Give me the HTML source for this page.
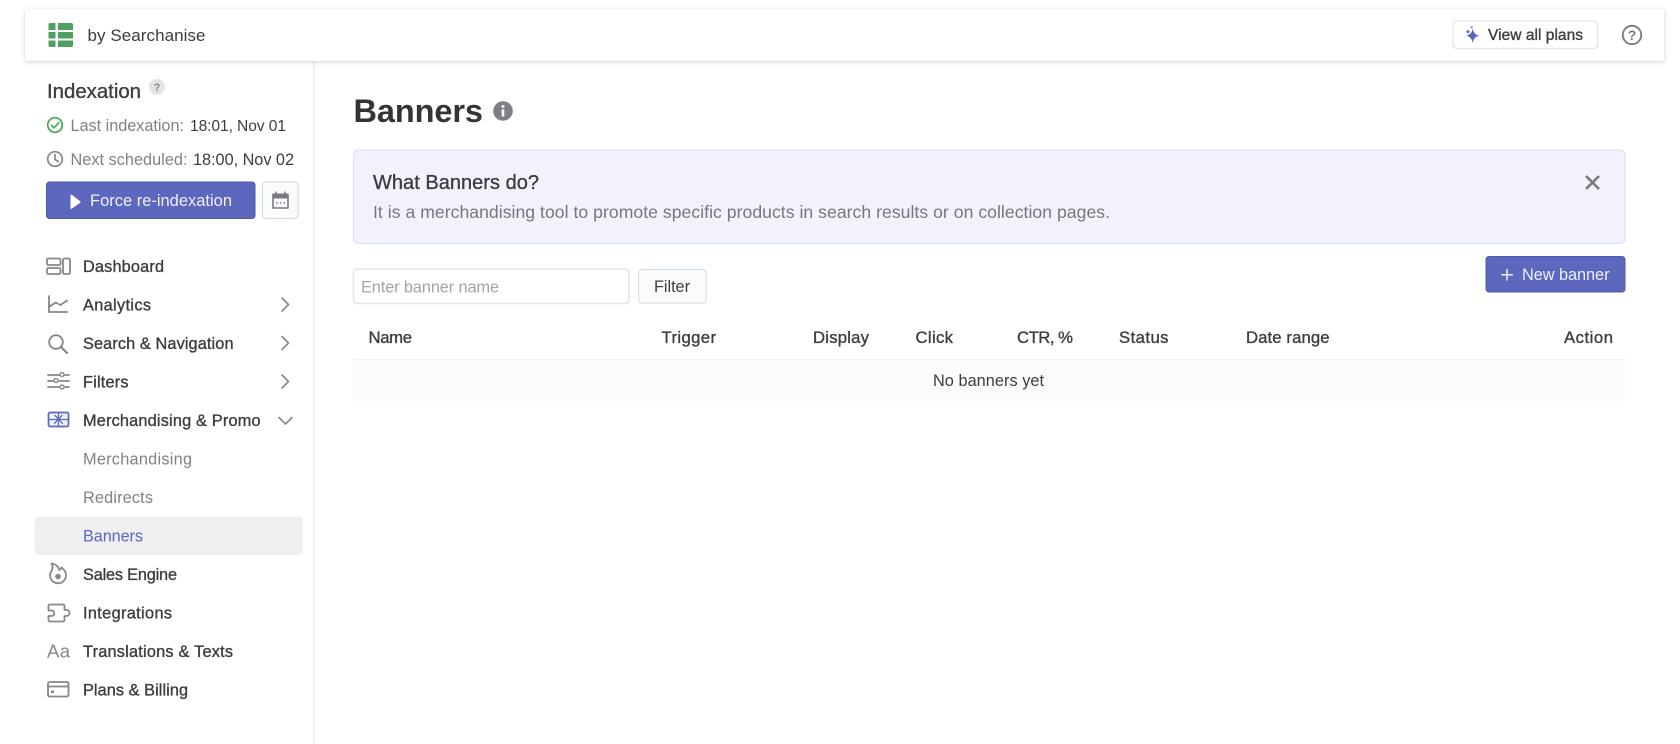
<!DOCTYPE html>
<html lang="en">
<head>
<meta charset="utf-8">
<title>Banners</title>
<style>
html,body{margin:0;padding:0;background:#fff;width:1680px;height:744px;overflow:hidden}
svg{display:block;position:absolute;left:0;top:0;filter:blur(.3px)}
text{font-family:"Liberation Sans",sans-serif;font-size:16.3px;fill:#3c3d3f}
.m{stroke:#3c3d3f;stroke-width:.35px}
.g{fill:#808285}
.th{font-size:16.7px}
.ic{fill:none;stroke:#85878a;stroke-width:1.8;stroke-linecap:round;stroke-linejoin:round}
</style>
</head>
<body>
<svg width="1680" height="744" viewBox="0 0 1680 744" xmlns="http://www.w3.org/2000/svg">
<defs>
<filter id="sh" x="-2%" y="-30%" width="104%" height="170%"><feDropShadow dx="0" dy="1" stdDeviation="2" flood-color="#000" flood-opacity=".18"/></filter>
</defs>
<rect x="313" y="60" width="1.5" height="684" fill="#ececec"/>
<!-- top bar -->
<rect x="25" y="9" width="1639" height="52" fill="#fff" filter="url(#sh)"/>
<g fill="#4f9f5e">
<path d="M50.500 23h5v7h-7v-5a2 2 0 0 1 2-2z"/>
<path d="M58 23h13a2 2 0 0 1 2 2v5h-15z"/>
<rect x="48.500" y="32" width="7" height="6.500"/>
<rect x="58" y="32" width="15" height="6.500"/>
<path d="M48.500 40.500h7v6.500h-5a2 2 0 0 1-2-2z"/>
<path d="M58 40.500h15v4.500a2 2 0 0 1-2 2h-13z"/>
</g>
<text x="87.500" y="41" textLength="118" style="font-size:17px">by Searchanise</text>
<rect x="1453" y="21" width="144.500" height="27.500" rx="4" fill="#fff" stroke="#e4e4e6" stroke-width="1.300"/>
<path d="M1472.700 28.800q1 5.700 6.300 6.900q-5.300 1.200-6.300 7q-1-5.800-6.300-7q5.300-1.200 6.300-6.900z" fill="#5c67bd"/>
<path d="M1468 29q.4 2.200 2.300 2.700q-1.900.5-2.300 2.700q-.4-2.200-2.300-2.700q1.900-.5 2.300-2.700z" fill="#5c67bd"/>
<circle cx="1471.700" cy="27.300" r="1" fill="#5c67bd"/>
<text class="m" x="1488" y="40" style="font-size:15.500px" textLength="95">View all plans</text>
<circle cx="1632" cy="35" r="9.200" fill="none" stroke="#77797c" stroke-width="1.800"/>
<text x="1632" y="40" text-anchor="middle" style="font-size:14px;font-weight:bold;fill:#77797c">?</text>

<!-- indexation -->
<text class="m" x="47" y="98" style="font-size:20.400px" textLength="94">Indexation</text>
<circle cx="157" cy="87" r="8" fill="#e4e4e4"/>
<text x="157" y="91" text-anchor="middle" style="font-size:11px;font-weight:bold;fill:#85878a">?</text>
<circle cx="55" cy="125" r="7.300" fill="none" stroke="#45a857" stroke-width="1.700"/>
<path d="M51.500 125.300l2.500 2.500 4.800-5" fill="none" stroke="#45a857" stroke-width="1.700" stroke-linecap="round" stroke-linejoin="round"/>
<text class="g" x="70.500" y="131" textLength="113.500">Last indexation:</text>
<text x="190" y="131" textLength="96" style="font-size:15.600px">18:01, Nov 01</text>
<circle cx="55" cy="159" r="7.300" fill="none" stroke="#85878a" stroke-width="1.700"/>
<path d="M55 154.500v5l3.200 2" fill="none" stroke="#85878a" stroke-width="1.700" stroke-linecap="round" stroke-linejoin="round"/>
<text class="g" x="70.500" y="165" textLength="117">Next scheduled:</text>
<text x="193" y="165" textLength="101">18:00, Nov 02</text>
<rect x="46.500" y="182" width="208.500" height="36.500" rx="3" fill="#5c67bd" stroke="#4d58aa"/>
<path d="M70.500 195.500v12.500a.8.8 0 0 0 1.200.7l8.500-6a.9.9 0 0 0 0-1.500l-8.500-6.400a.8.8 0 0 0-1.200.7z" fill="#fff"/>
<text x="90" y="206" style="font-size:16.500px;fill:#eef0fb" textLength="142">Force re-indexation</text>
<rect x="262.500" y="182" width="35.500" height="36.500" rx="3" fill="#f9fbfd" stroke="#d6dde6" stroke-width="1.200"/>
<path d="M273 194.500h15v13.500h-15z" fill="none" stroke="#77797c" stroke-width="1.600" stroke-linejoin="round"/>
<path d="M272.500 193.500h16v5h-16z" fill="#77797c"/>
<path d="M276 191.500v3M285 191.500v3" stroke="#77797c" stroke-width="1.500"/>
<path d="M276 203h1.500M279.800 203h1.500M283.500 203h1.500" stroke="#77797c" stroke-width="1.500"/>

<!-- nav -->
<rect x="34.500" y="516.500" width="268.500" height="38.500" rx="5" fill="#efeff1"/>
<g class="ic">
<!-- dashboard -->
<rect x="47" y="258.500" width="13.500" height="6.500" rx="1.500"/>
<rect x="47" y="268" width="13.500" height="6" rx="1.500"/>
<rect x="63" y="258.500" width="7" height="15.500" rx="1.500"/>
<!-- analytics -->
<path d="M49 296v16h18"/>
<path d="M49 307l6.500-4.500 5 2.500 6.500-4.500"/>
<!-- search -->
<circle cx="56" cy="342" r="6.800"/>
<path d="M61 347l6 6" stroke-width="2.200"/>
<!-- filters -->
<path d="M48 375h11M65 375h4M48 381h5M59 381h10M48 387h11M65 387h4"/>
<circle cx="62" cy="374.500" r="2" stroke-width="1.400"/>
<circle cx="56" cy="380.500" r="2" stroke-width="1.400"/>
<circle cx="62" cy="387" r="2" stroke-width="1.400"/>
<!-- flame -->
<path d="M51.500 563.500c3.500.5 7 2.500 7.500 6.500 1.200-.3 2-1.200 2.300-2.500 3 2 4.700 4.800 4.700 7.800 0 4.500-3.600 8-8 8s-8-3.500-8-8c0-2 1-3.800 2-5.500 1-1.700.8-3.800-.5-6.300z"/>
<!-- puzzle -->
<path d="M51 604.500h12a1.500 1.500 0 0 1 1.500 1.500v4h2a3 3 0 0 1 0 6h-2v4a1.500 1.500 0 0 1-1.500 1.500h-13a1.500 1.500 0 0 1-1.500-1.500v-4h3a2.500 2.500 0 0 0 0-5.500h-3v-4.500a1.500 1.500 0 0 1 1.500-1.500z"/>
<!-- card -->
<rect x="48" y="682" width="20.500" height="14.500" rx="1.800"/>
<path d="M48 686.500h20.500"/>
</g>
<circle cx="58" cy="576.500" r="2.800" fill="#85878a"/>
<rect x="51" y="690.500" width="3" height="2.500" fill="#85878a"/>
<text x="47" y="657.500" style="font-size:18.500px;fill:#85878a" textLength="23">Aa</text>
<!-- gift -->
<g fill="none" stroke="#5c67bd" stroke-width="1.700" stroke-linecap="round" stroke-linejoin="round">
<rect x="48.500" y="412.500" width="20" height="14" rx="1.500" fill="#eef0fb"/>
<path d="M48.500 419.500h20" stroke-width="1.300"/>
<path d="M58.500 412.500v14M58.500 419l-3.500-3.500M58.500 419l3.500-3.500M58.500 419l-4 4.500M58.500 419l4 4.500" stroke-width="1.300"/>
</g>
<g>
<text class="m" x="83" y="272" textLength="81">Dashboard</text>
<text class="m" x="83" y="310.500" textLength="68">Analytics</text>
<text class="m" x="83" y="349" textLength="150.500">Search &amp; Navigation</text>
<text class="m" x="83" y="387.500" textLength="45.500">Filters</text>
<text class="m" x="83" y="426" textLength="177.500">Merchandising &amp; Promo</text>
<text class="g" x="83" y="464.500" textLength="109">Merchandising</text>
<text class="g" x="83" y="503" textLength="70">Redirects</text>
<text x="83" y="541.500" style="fill:#5c67bd" textLength="60">Banners</text>
<text class="m" x="83" y="580" textLength="94">Sales Engine</text>
<text class="m" x="83" y="618.500" textLength="89">Integrations</text>
<text class="m" x="83" y="657" textLength="150">Translations &amp; Texts</text>
<text class="m" x="83" y="695.500" textLength="105">Plans &amp; Billing</text>
</g>
<g fill="none" stroke="#85878a" stroke-width="1.600" stroke-linecap="round" stroke-linejoin="round">
<path d="M282 298l6.500 6.500-6.500 6.500"/>
<path d="M282 336.500l6.500 6.500-6.500 6.500"/>
<path d="M282 375l6.500 6.500-6.500 6.500"/>
<path d="M279 417.500l6.500 6.500 6.500-6.500"/>
</g>

<!-- main -->
<text x="353.500" y="122" style="font-size:32.500px;font-weight:bold;fill:#333436" textLength="129.500">Banners</text>
<circle cx="503" cy="111" r="9.800" fill="#7e8085"/>
<rect x="501.700" y="109.500" width="2.600" height="7" fill="#fff"/>
<circle cx="503" cy="106.500" r="1.500" fill="#fff"/>

<rect x="353.500" y="150" width="1271.500" height="93.500" rx="5" fill="#f1f2fc" stroke="#dfe1f6" stroke-width="1.200"/>
<text class="m" x="373" y="189" style="font-size:20px" textLength="166">What Banners do?</text>
<text x="373" y="218" style="font-size:17.600px;fill:#75777b" textLength="737">It is a merchandising tool to promote specific products in search results or on collection pages.</text>
<path d="M1586 176l13 13M1599 176l-13 13" stroke="#77797c" stroke-width="2.600" fill="none"/>

<rect x="353.500" y="269" width="275.500" height="34.500" rx="3.500" fill="#fff" stroke="#e6e6e8" stroke-width="1.600"/>
<text x="361" y="292.500" style="fill:#a2a4a7" textLength="138">Enter banner name</text>
<rect x="638.500" y="269.500" width="67.500" height="33.500" rx="3" fill="#f9fbfd" stroke="#d8dee8" stroke-width="1.200"/>
<text x="654" y="292" textLength="36">Filter</text>
<rect x="1486" y="256.500" width="139" height="35.500" rx="3" fill="#5c67bd" stroke="#4d58aa"/>
<path d="M1507 269.500v10.500M1501.800 274.700h10.500" stroke="#eef0fb" stroke-width="1.500" stroke-linecap="round"/>
<text x="1522" y="280" style="fill:#eef0fb" textLength="87.500">New banner</text>

<g>
<text class="m th" x="368.500" y="343" textLength="43.500">Name</text>
<text class="m th" x="661.500" y="343" textLength="54.500">Trigger</text>
<text class="m th" x="813" y="343" textLength="56">Display</text>
<text class="m th" x="915.500" y="343" textLength="37.500">Click</text>
<text class="m th" x="1017" y="343" textLength="56">CTR, %</text>
<text class="m th" x="1119" y="343" textLength="49.500">Status</text>
<text class="m th" x="1246" y="343" textLength="83.500">Date range</text>
<text class="m th" x="1564" y="343" textLength="49">Action</text>
</g>
<rect x="353" y="359" width="1272" height="42" fill="#fbfbfb"/>
<rect x="353" y="359" width="1272" height="1" fill="#f1f1f1"/>
<text x="933" y="386" textLength="111">No banners yet</text>
</svg>
</body>
</html>
